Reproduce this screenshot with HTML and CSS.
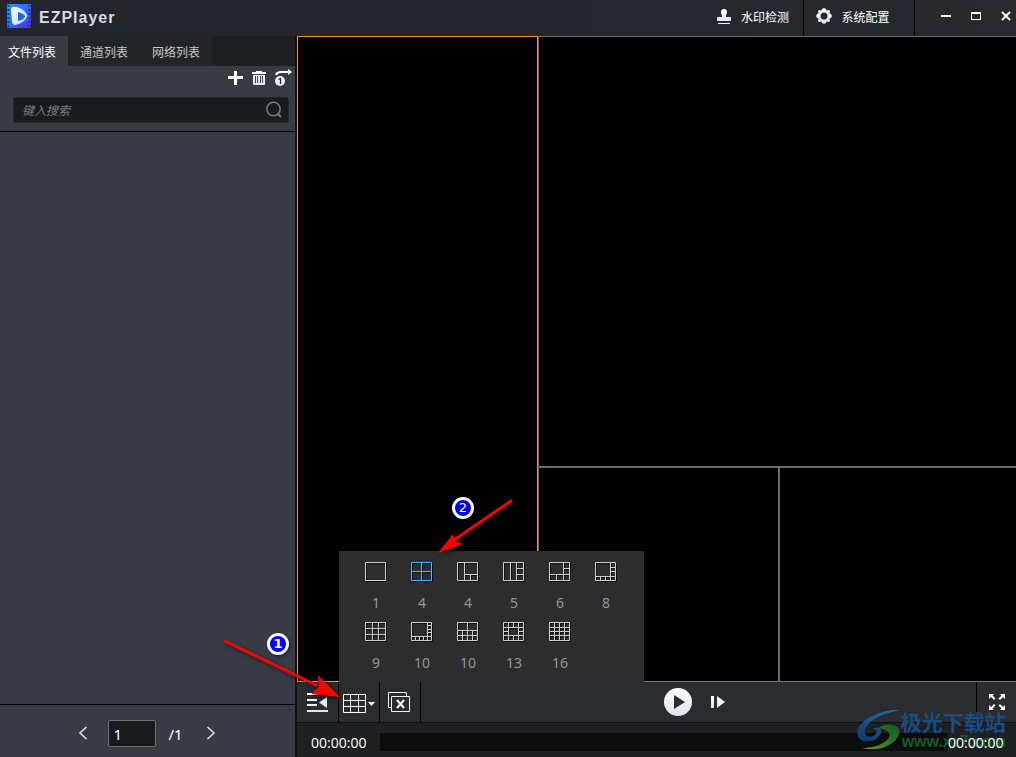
FILE: index.html
```html
<!DOCTYPE html>
<html lang="zh-CN">
<head>
<meta charset="utf-8">
<title>EZPlayer</title>
<link rel="stylesheet" href="styles.css">
</head>
<body>
<svg width="0" height="0" class="defs" aria-hidden="true">
  <defs>
    <linearGradient id="logoBg" x1="0" y1="0" x2="1" y2="1"><stop offset="0" stop-color="#1aa0ff"/><stop offset=".5" stop-color="#2b6cff"/><stop offset="1" stop-color="#5a22f0"/></linearGradient>
    <linearGradient id="logoFg" x1="0" y1="0" x2="1" y2="1"><stop offset="0" stop-color="#fff"/><stop offset="1" stop-color="#a9dcff"/></linearGradient>
    <linearGradient id="silver" x1="0" y1="0" x2="0" y2="1"><stop offset="0" stop-color="#fff"/><stop offset="1" stop-color="#dce4f0"/></linearGradient>
    <linearGradient id="swBlue" x1="0" y1="1" x2="1" y2="0"><stop offset="0" stop-color="#10326e"/><stop offset="1" stop-color="#2277a6"/></linearGradient>
    <linearGradient id="swGreen" x1="0" y1="1" x2="1" y2="0"><stop offset="0" stop-color="#858d1c"/><stop offset=".5" stop-color="#327629"/><stop offset="1" stop-color="#115a25"/></linearGradient>
  </defs>
</svg>
<div class="app">
  <header class="titlebar">
    <svg class="logo" width="24" height="24" viewBox="0 0 24 24"><rect width="24" height="24" rx="1" fill="url(#logoBg)"/><path d="M1.500 1v22M22.500 1v22" stroke="#1735b0" stroke-width="2" stroke-dasharray="2 2"/><path d="M4 6Q4 2 9 3Q15 4 19 9Q22 12 18 16Q14 20 8 21Q5 21 5 17Z" fill="url(#logoFg)"/><path d="M11 8Q18 10 18 12.500Q17 16 11 17Z" fill="#2864f4"/></svg>
    <h1 class="brand">EZPlayer</h1>
    <button class="title-action watermark-check"><svg width="16" height="17" viewBox="0 0 16 17"><path d="M5 4a3 3 0 0 1 6 0c0 2-1 2-1 5h4q1 0 1 1v3H1v-3q0-1 1-1h4c0-3-1-3-1-5Z" fill="url(#silver)"/><path d="M2 15h12v1H2z" fill="#eef2f8"/></svg><span>水印检测</span></button>
    <button class="title-action settings"><svg width="16" height="16" viewBox="0 0 16 16"><path fill="url(#silver)" fill-rule="evenodd" d="M6 1l2-1 2 1 .5 1.500L13 2l1 1-.5 2.500L15 6l1 2-1 2-1.500.5L14 13l-1 1-2.500-.5L10 15l-2 1-2-1-.5-1.500L3 14l-1-1 .5-2.500L1 10 0 8l1-2 1.500-.5L2 3l1-1 2.500.5ZM8 4.500a3.500 3.500 0 1 0 0 7 3.500 3.500 0 0 0 0-7Z"/></svg><span>系统配置</span></button>
    <div class="window-buttons">
      <button aria-label="最小化"><svg width="12" height="12"><path d="M1 5h10v2H1z" fill="#fff"/></svg></button>
      <button aria-label="最大化"><svg width="12" height="12"><path d="M1 2h10v8H1zM2 4v5h8V4z" fill="#fff" fill-rule="evenodd"/></svg></button>
      <button aria-label="关闭"><svg width="12" height="12"><path d="M2 2l8 8M10 2l-8 8" stroke="#fff" stroke-width="2"/></svg></button>
    </div>
  </header>

  <div class="workspace">
    <aside class="sidebar">
      <nav class="tabs">
        <button class="tab active">文件列表</button>
        <button class="tab">通道列表</button>
        <button class="tab">网络列表</button>
      </nav>
      <div class="list-tools">
        <button aria-label="添加"><svg width="16" height="16"><path d="M6 1h3v5h6v3H9v6H6V9H0V6h6z" fill="#fff"/></svg></button>
        <button aria-label="删除"><svg width="14" height="16" viewBox="0 0 14 16"><path d="M4 1h6v1h4v2H0V2h4z" fill="#fff"/><path d="M1 5h12v9q0 1-1 1H2q-1 0-1-1z" fill="url(#silver)"/><path d="M3.500 6v7M5.500 6v7M8.500 6v7M10.500 6v7" stroke="#3d414b"/></svg></button>
        <button aria-label="单个循环"><svg width="18" height="18" viewBox="0 0 18 18"><circle cx="6" cy="12" r="5" fill="url(#silver)"/><path d="M4.500 10.500L6.500 9.500V15" fill="none" stroke="#22262d" stroke-width="1.300"/><path d="M2 6q1-3 5-3h7" fill="none" stroke="#fff" stroke-width="2"/><path d="M14 0l4 3-4 3z" fill="#fff"/></svg></button>
      </div>
      <form class="search">
        <input type="text" aria-label="搜索" placeholder="键入搜索">
        <svg width="18" height="18" viewBox="0 0 18 18"><circle cx="8.500" cy="8" r="6.700" fill="none" stroke="#77797c" stroke-width="1.600"/><path d="M12.500 12.500L16 16" stroke="#77797c" stroke-width="2"/></svg>
      </form>
      <div class="file-list"></div>
      <div class="pager">
        <button aria-label="上一页"><svg width="10" height="14"><path d="M8.500 1L2 7l6.500 6" fill="none" stroke="#e4e4e6" stroke-width="1.500"/></svg></button>
        <input type="text" aria-label="页码" value="1">
        <span class="page-total">/1</span>
        <button aria-label="下一页"><svg width="10" height="14"><path d="M1.500 1L8 7l-6.500 6" fill="none" stroke="#e4e4e6" stroke-width="1.500"/></svg></button>
      </div>
    </aside>

    <main class="player">
      <div class="panes">
        <div class="pane selected"></div>
        <div class="pane wide"></div>
        <div class="pane"></div>
        <div class="pane last"></div>
      </div>
      <div class="toolbar">
        <button class="tool" aria-label="收起列表"><svg width="22" height="20"><path d="M0 1h21v2H0zM0 7h10v2H0zM0 12h10v2H0zM0 18h21v2H0z" fill="url(#silver)"/><path d="M20 5v11l-8-5.500z" fill="#e9eef5"/></svg></button>
        <div class="split-wrap">
          <button class="tool split" aria-label="画面分割"><svg width="34" height="20"><path d="M1.500.5h22v18h-22zM8.500 1v17M16.500 1v17M2 6.500h22M2 12.500h22" fill="none" stroke="#fff"/><path d="M26 8h7l-3.500 4z" fill="#fff"/></svg></button>
          <div class="layout-menu">
            <button><svg viewBox="0 0 23 21"><path d="M.5.5h20v18H.5z"/></svg>1</button>
            <button class="current"><svg viewBox="0 0 23 21"><path d="M.5.5h20v18H.5zM10.500 1v17M1 9.500h19"/></svg>4</button>
            <button><svg viewBox="0 0 23 21"><path d="M.5.5h20v18H.5zM7.500 1v17M8 12.500h12M13.500 13v5"/></svg>4</button>
            <button><svg viewBox="0 0 23 21"><path d="M.5.5h20v18H.5zM7.500 1v17M13.500 1v17M14 6.500h6M14 12.500h6"/></svg>5</button>
            <button><svg viewBox="0 0 23 21"><path d="M.5.5h20v18H.5zM14.500 1v17M1 12.500h19M15 6.500h5M7.500 13v5"/></svg>6</button>
            <button><svg viewBox="0 0 23 21"><path d="M.5.5h20v18H.5zM15.500 1v17M1 14.500h19M16 5.500h4M16 9.500h4M5.500 15v3M10.500 15v3"/></svg>8</button>
            <button><svg viewBox="0 0 23 21"><path d="M.5.5h20v18H.5zM7.500 1v17M13.500 1v17M1 6.500h19M1 12.500h19"/></svg>9</button>
            <button><svg viewBox="0 0 23 21"><path d="M.5.5h20v18H.5zM16.500 1v17M1 14.500h19M17 3.500h3M17 7.500h3M17 10.500h3M4.500 15v3M8.500 15v3M12.500 15v3"/></svg>10</button>
            <button><svg viewBox="0 0 23 21"><path d="M.5.5h20v18H.5zM1 8.500h19M1 13.500h19M10.500 1v17M5.500 9v9M15.500 9v9"/></svg>10</button>
            <button><svg viewBox="0 0 23 21"><path d="M.5.5h20v18H.5zM5.500 1v17M15.500 1v17M1 5.500h19M1 13.500h19M10.500 1v4M10.500 14v4M1 9.500h4M16 9.500h4"/></svg>13</button>
            <button><svg viewBox="0 0 23 21"><path d="M.5.5h20v18H.5zM5.500 1v17M10.500 1v17M15.500 1v17M1 5.500h19M1 9.500h19M1 13.500h19"/></svg>16</button>
          </div>
        </div>
        <button class="tool close-all" aria-label="关闭全部"><svg width="22" height="21"><path d="M3.500 15.500h-3V.5h18V4M3.500 4.500h18v15h-18z" fill="none" stroke="#eef2f8"/><path d="M9 8l7 8M16 8l-7 8" stroke="#fff" stroke-width="2"/></svg></button>
        <div class="transport">
          <button aria-label="播放"><svg width="28" height="28"><circle cx="14" cy="14" r="14" fill="url(#silver)"/><path d="M10 7v14l11-7z" fill="#2c2d31"/></svg></button>
          <button aria-label="单帧播放"><svg width="15" height="14"><path d="M0 1h3v12H0zM6 1l8 6-8 6z" fill="url(#silver)"/></svg></button>
        </div>
        <button class="fullscreen" aria-label="全屏"><svg width="16" height="16" viewBox="0 0 16 16"><path id="corner" d="M0 0h5L3.500 1.500 6.500 4.500 5 6 2 3 0 5z" fill="#fff"/><use href="#corner" transform="translate(16 0) scale(-1 1)"/><use href="#corner" transform="translate(0 16) scale(1 -1)"/><use href="#corner" transform="translate(16 16) scale(-1 -1)"/></svg></button>
      </div>
      <div class="timeline">
        <time>00:00:00</time>
        <div class="track"></div>
        <time class="end">00:00:00</time>
      </div>
    </main>
  </div>

  <div class="site-mark">
    <svg width="44" height="42" viewBox="0 0 44 42"><path d="M43 1C26 0 5 9 1 20c-3 9 4 14 12 12 7-1 12-6 11-11-1-3-5-3-8-1 4 0 5 3 2 6-4 3-10 2-10-3C8 13 23 5 43 1Z" fill="url(#swBlue)"/><path d="M22 19c4-4 14-5 19 0 4 5-1 13-9 17-8 5-18 5-27 3 9 0 19-2 25-8 5-5 3-10-8-12Z" fill="url(#swGreen)"/></svg>
    <div><strong>极光下载站</strong><span>www.xz7.com</span></div>
  </div>

  <svg class="pointer first" width="120" height="64" viewBox="0 0 120 64"><path d="M3 4l91 44" stroke="#f00" stroke-width="3" stroke-linecap="round"/><path d="M118 60L89 57l8-7-1-12z" fill="#f00"/></svg>
  <span class="badge first">1</span>
  <svg class="pointer second" width="78" height="58" viewBox="0 0 78 58"><path d="M75 3L18 42" stroke="#f00" stroke-width="3" stroke-linecap="round"/><path d="M2 55l15-19 2 7 8 3z" fill="#f00"/></svg>
  <span class="badge second">2</span>
</div>
</body>
</html>
```
FILE: styles.css
```css
* { box-sizing: border-box; }
html, body { height: 100%; margin: 0; }
body {
  background: #000;
  color: #fff;
  font: 12px "Noto Sans CJK SC", sans-serif;
  overflow: hidden;
}
button { padding: 0; border: 0; background: none; color: inherit; font: inherit; display: flex; align-items: center; justify-content: center; }
svg { display: block; flex: none; }
input { border: 0; outline: 0; min-width: 0; }
.defs { position: absolute; }

.app { position: relative; height: 100%; display: flex; flex-direction: column; }

.titlebar { height: 36px; flex: none; display: flex; align-items: stretch; background: linear-gradient(90deg, #24242b, #27292e); }
.logo { margin: 4px 8px 0 7px; }
.brand { margin: 0; flex: 1; font: bold 16px/36px "Liberation Sans", sans-serif; letter-spacing: 1px; color: #d5dbe6; }
.title-action { gap: 9px; padding: 0 10px 4px 12px; border-right: 1px solid #000; white-space: nowrap; }
.title-action.watermark-check { width: 104px; }
.title-action.settings { width: 111px; padding: 0 12px 4px 0; }
.window-buttons { display: flex; gap: 18px; padding: 0 4px 4px 25px; }

.workspace { flex: 1; min-height: 0; display: flex; }
.sidebar { width: 297px; flex: none; display: flex; flex-direction: column; background: #383b43; border-right: 2px solid #101114; }
.tabs { display: flex; height: 30px; flex: none; background: #1e1f22; }
.tab { width: 72px; color: #c5c6c8; background: #222428; }
.tab.active { width: 68px; padding-right: 4px; background: #383b43; color: #fff; }
.list-tools { height: 24px; display: flex; align-items: center; justify-content: flex-end; gap: 8px; padding-right: 3px; }
.search { display: flex; align-items: center; height: 26px; margin: 7px 6px 8px 13px; padding: 0 5px 0 6px; background: #191b1e; border: 1px solid #24262a; border-radius: 3px; }
.search input { flex: 1; background: none; padding: 0 2px 2px; font: italic 12px "Noto Sans CJK SC", sans-serif; color: #ddd; }
.search input::placeholder { color: #777f84; opacity: 1; }
.file-list { flex: 1; border-top: 1px solid #000; }
.pager { height: 53px; flex: none; display: flex; align-items: center; justify-content: center; padding: 4px 1px 0 0; border-top: 1px solid #000; font: 15px "Noto Sans", sans-serif; }
.pager input { width: 48px; height: 27px; margin: 0 12px 0 20px; padding: 2px 4px 0; background: #1a1b1f; border: 1px solid #6b6e75; border-radius: 2px; color: #fff; font: inherit; }
.page-total { margin-right: 23px; padding-top: 2px; }

.player { flex: 1; min-width: 0; display: flex; flex-direction: column; }
.panes { flex: 1; display: grid; grid-template-columns: 242fr 241fr 236fr; grid-template-rows: 2fr 1fr; grid-template-rows: 431fr 213fr; border-top: 1px solid #6c6c6c; border-bottom: 1px solid #777; }
.pane { background: #000; border-right: 2px solid #6c6c6c; }
.pane.selected { grid-row: span 2; margin: -1px 1px -1px 0; border: 1px solid #f7941d; box-shadow: 1px 0 #6c6c6c; }
.pane.wide { grid-column: span 2; border-right: 0; border-bottom: 2px solid #6c6c6c; }
.pane.last { border-right: 0; }

.toolbar { position: relative; height: 41px; flex: none; display: flex; background: #2b2c30; border-bottom: 1px solid #111214; }
.tool { width: 41px; height: 40px; border-right: 1px solid #000; }
.tool:first-child { width: 42px; }
.split-wrap { position: relative; }
.split-wrap .tool { width: 41px; padding-top: 3px; }
.tool.close-all { padding-right: 2px; }
.layout-menu { position: absolute; left: 0; bottom: 100%; width: 305px; height: 131px; padding: 11px 14px; display: grid; grid-template-columns: repeat(6, 46px); grid-auto-rows: 60px; background: #2d2d2d; }
.layout-menu button { flex-direction: column; justify-content: flex-start; gap: 8px; font: 14px/24px "Noto Sans", sans-serif; color: #969696; }
.layout-menu svg { width: 23px; height: 21px; fill: none; stroke: #cfcfcf; filter: drop-shadow(1px 1px 0 #111); }
.layout-menu .current svg { stroke: #5ab5f5; }
.transport { position: absolute; inset: 0 auto 0 51%; display: flex; align-items: center; gap: 19px; }
.fullscreen { width: 40px; margin-left: auto; border-left: 1px solid #000; }

.timeline { height: 34px; flex: none; display: flex; align-items: center; gap: 12px; padding: 4px 11px 0 14px; background: #1f2022; }
.timeline time { width: 57px; white-space: nowrap; font: 14px "Open Sans", sans-serif; }
.track { flex: 1; height: 18px; background: #0d0d0d; }
.timeline .end { margin-left: -12px; position: relative; z-index: 3; }

.site-mark { position: absolute; right: 10px; bottom: 6px; display: flex; align-items: center; z-index: 1; }
.site-mark div { display: flex; flex-direction: column; }
.site-mark strong { font: bold 21px/24px "Noto Sans CJK SC", sans-serif; color: #174d80; }
.site-mark span { font: bold 16px/18px "Liberation Sans", sans-serif; color: #14592b; padding-left: 1px; }

.pointer { position: absolute; z-index: 4; filter: drop-shadow(2px 2px 2px #0008); }
.pointer.first { left: 222px; top: 637px; }
.pointer.second { left: 436px; top: 498px; }
.badge { position: absolute; z-index: 4; width: 22px; height: 22px; border: 3px solid #fff; border-radius: 50%; background: #00f; font: 13px/16px "DejaVu Sans", sans-serif; text-align: center; box-shadow: 1px 1px 3px #0008; }
.badge.first { left: 267px; top: 633px; font-weight: bold; }
.badge.second { left: 452px; top: 497px; }
```
